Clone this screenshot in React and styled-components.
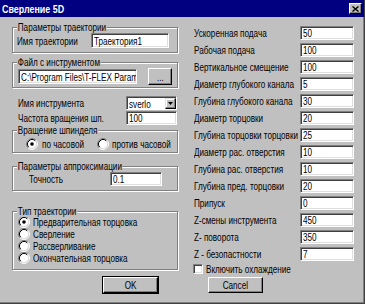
import React from 'react';
import styled, { createGlobalStyle } from 'styled-components';

const GlobalStyle = createGlobalStyle`
    html, body {
        margin: 0;
        padding: 0;
        background: #c0c0c0;
    }
    body {
        font-family: "Liberation Sans", Arial, sans-serif;
        font-size: 10.5px;
        color: #000;
    }
`;

// the dialog font is a narrow bitmap face; squeeze Arial-metric text to its width
const Text = styled.span`
    display: inline-block;
    white-space: nowrap;
    transform: scaleX(${p => p.$scale || 0.775});
    transform-origin: ${p => (p.$center ? 'center' : 'left')} center;
`;

const Window = styled.div`
    width: 365px;
    height: 304px;
    box-sizing: border-box;
    background: #c0c0c0;
    border-right: 1px solid #404040;
    border-bottom: 1px solid #404040;
    box-shadow: inset -1px -1px 0 #808080;
    overflow: hidden;
`;
const TitleBar = styled.div`
    height: 17px;
    background: #000080;
    display: flex;
    align-items: center;
    justify-content: space-between;
    padding: 0 2px 0 2px;
`;
const TitleText = styled(Text)`
    color: #fff;
    font-weight: bold;
    font-size: 11px;
`;
const CloseButton = styled.div`
    width: 13px;
    height: 11px;
    box-sizing: border-box;
    background: #c0c0c0;
    border-top: 1px solid #fff;
    border-left: 1px solid #fff;
    border-right: 1px solid #000;
    border-bottom: 1px solid #000;
    box-shadow: inset -1px -1px 0 #808080;
    display: flex;
    align-items: center;
    justify-content: center;
`;
const Body = styled.div`
    display: flex;
    align-items: flex-start;
    padding-left: 12px;
`;
const LeftColumn = styled.div`
    width: 166px;
    padding-top: 5px;
    display: flex;
    flex-direction: column;
`;
const RightColumn = styled.div`
    width: 160px;
    margin-left: 16px;
    padding-top: 9px;
    display: flex;
    flex-direction: column;
`;
const Group = styled.div`
    margin-top: ${p => p.$top || 0}px;
    border: 1px solid #808080;
    box-shadow: inset 1px 1px 0 #fff, 1px 1px 0 #fff;
`;
const Caption = styled.div`
    width: fit-content;
    margin: -6px 0 0 4px;
    padding: 0 1px;
    line-height: 11px;
    white-space: nowrap;
    background: #c0c0c0;
    transform: scaleX(0.775);
    transform-origin: left center;
`;
const GroupRow = styled.div`
    display: flex;
    align-items: center;
    height: ${p => p.$h}px;
    padding: 0 0 ${p => p.$pb}px ${p => p.$pl}px;
`;
const Label = styled.div`
    width: ${p => (p.$w ? `${p.$w}px` : 'auto')};
    flex: ${p => (p.$w ? 'none' : '1 1 0')};
    min-width: 0;
    line-height: 12px;
`;
const Field = styled.div`
    width: ${p => p.$w}px;
    height: ${p => p.$h || 14}px;
    flex: none;
    box-sizing: border-box;
    padding: 0 2px;
    background: #fff;
    border-top: 1px solid #808080;
    border-left: 1px solid #808080;
    border-right: 1px solid #fff;
    border-bottom: 1px solid #fff;
    box-shadow: inset 1px 1px 0 #404040, inset -1px -1px 0 #dfdfdf;
    display: flex;
    align-items: center;
    overflow: hidden;
`;
const Button = styled.div`
    width: ${p => p.$w}px;
    height: ${p => p.$h}px;
    margin-left: ${p => p.$left || 0}px;
    margin-top: ${p => p.$top || 0}px;
    box-sizing: border-box;
    background: #c0c0c0;
    border-top: 1px solid #fff;
    border-left: 1px solid #fff;
    border-right: 1px solid #000;
    border-bottom: 1px solid #000;
    box-shadow: inset -1px -1px 0 #808080;
    outline: ${p => (p.$default ? '1px solid #000' : 'none')};
    display: flex;
    align-items: center;
    justify-content: center;
    flex: none;
`;
const FormRow = styled.div`
    display: flex;
    align-items: center;
    height: 14px;
    margin-top: ${p => p.$top || 0}px;
    padding: 0 1px 0 6px;
`;
const Combo = styled.div`
    width: 51px;
    height: 14px;
    flex: none;
    box-sizing: border-box;
    background: #fff;
    border-top: 1px solid #808080;
    border-left: 1px solid #808080;
    border-right: 1px solid #fff;
    border-bottom: 1px solid #fff;
    box-shadow: inset 1px 1px 0 #404040;
    display: flex;
    align-items: stretch;
    padding: 1px 0 0 1px;
`;
const ComboText = styled.div`
    flex: 1;
    padding-left: 1px;
    display: flex;
    align-items: center;
    overflow: hidden;
`;
const ComboArrow = styled.span`
    width: 11px;
    box-sizing: border-box;
    background: #c0c0c0;
    border-top: 1px solid #dfdfdf;
    border-left: 1px solid #dfdfdf;
    border-right: 1px solid #000;
    border-bottom: 1px solid #000;
    box-shadow: inset -1px -1px 0 #808080, inset 1px 1px 0 #fff;
    display: flex;
    align-items: center;
    justify-content: center;
`;
const RadioLine = styled.div`
    display: grid;
    grid-template-columns: 71px auto;
    height: 12px;
    padding: 2px 0 2px 13px;
`;
const RadioList = styled.div`
    margin-top: -1px;
    padding: 0 0 5px 5px;
`;
const RadioItem = styled.div`
    display: flex;
    align-items: center;
    gap: ${p => p.$gap}px;
    height: 12px;
    min-width: 0;
`;
const SideRow = styled.div`
    display: flex;
    align-items: center;
    height: 14px;
    margin-bottom: 3px;
`;
const CheckRow = styled.div`
    display: flex;
    align-items: center;
    gap: 3px;
    height: 10px;
    margin-left: -1px;
`;
const CheckBox = styled.span`
    width: 10px;
    height: 10px;
    flex: none;
    box-sizing: border-box;
    background: #fff;
    border-top: 1px solid #808080;
    border-left: 1px solid #808080;
    border-right: 1px solid #fff;
    border-bottom: 1px solid #fff;
    box-shadow: inset 1px 1px 0 #404040, inset -1px -1px 0 #dfdfdf;
`;

const Radio = ({ checked }) => (
    <svg width="12" height="12" viewBox="0 0 12 12" style={{ flex: 'none' }}>
        <circle cx="6" cy="6" r="4.5" fill="#fff" />
        <path d="M2.11 9.89 A5.5 5.5 0 0 1 9.89 2.11" fill="none" stroke="#808080" />
        <path d="M2.82 9.18 A4.5 4.5 0 0 1 9.18 2.82" fill="none" stroke="#000" />
        <path d="M9.89 2.11 A5.5 5.5 0 0 1 2.11 9.89" fill="none" stroke="#fff" />
        <path d="M9.18 2.82 A4.5 4.5 0 0 1 2.82 9.18" fill="none" stroke="#dfdfdf" />
        {checked && <circle cx="6" cy="6" r="1.8" fill="#000" />}
    </svg>
);

const params = [
    ['Ускоренная подача', '50'],
    ['Рабочая подача', '100'],
    ['Вертикальное смещение', '100'],
    ['Диаметр глубокого канала', '5'],
    ['Глубина глубокого канала', '30'],
    ['Диаметр торцовки', '20'],
    ['Глубина торцовки торцовки', '25'],
    ['Диаметр рас. отверстия', '10'],
    ['Глубина рас. отверстия', '10'],
    ['Глубина пред. торцовки', '20'],
    ['Припуск', '0'],
    ['Z-смены инструмента', '450'],
    ['Z- поворота', '350'],
    ['Z - безопастности', '7'],
];

const trajectoryTypes = [
    'Предварительная торцовка',
    'Сверление',
    'Рассверливание',
    'Окончательная торцовка',
];

export default function App() {
    return (
        <Window>
            <GlobalStyle />
            <TitleBar>
                <TitleText $scale={0.81}>Сверление 5D</TitleText>
                <CloseButton>
                    <svg width="7" height="6" viewBox="0 0 7 6">
                        <path d="M0.5 0.5 L6.5 5.5 M6.5 0.5 L0.5 5.5" stroke="#000" strokeWidth="1.4" />
                    </svg>
                </CloseButton>
            </TitleBar>
            <Body>
                <LeftColumn>
                    <Group $top={5}>
                        <Caption>Параметры траектории</Caption>
                        <GroupRow $h={15} $pb={4} $pl={4}>
                            <Label $w={74}><Text>Имя траектории</Text></Label>
                            <Field $w={78} $h={15}><Text>Траектория1</Text></Field>
                        </GroupRow>
                    </Group>
                    <Group $top={9}>
                        <Caption>Файл с инструментом</Caption>
                        <GroupRow $h={17} $pb={2} $pl={5}>
                            <Field $w={119} $h={15}><Text>{'C:\\Program Files\\T-FLEX Param'}</Text></Field>
                            <Button $w={24} $h={17} $left={11}><Text $center>...</Text></Button>
                        </GroupRow>
                    </Group>
                    <FormRow $top={8}>
                        <Label><Text>Имя инструмента</Text></Label>
                        <Combo>
                            <ComboText><Text>sverlo</Text></ComboText>
                            <ComboArrow>
                                <svg width="5" height="3" viewBox="0 0 5 3">
                                    <path d="M0 0 H5 L2.5 3 Z" fill="#000" />
                                </svg>
                            </ComboArrow>
                        </Combo>
                    </FormRow>
                    <FormRow $top={1}>
                        <Label><Text>Частота вращения шп.</Text></Label>
                        <Field $w={51}><Text>100</Text></Field>
                    </FormRow>
                    <Group $top={5}>
                        <Caption>Вращение шпинделя</Caption>
                        <RadioLine>
                            <RadioItem $gap={4}><Radio checked /><Text>по часовой</Text></RadioItem>
                            <RadioItem $gap={3}><Radio /><Text>против часовой</Text></RadioItem>
                        </RadioLine>
                    </Group>
                    <Group $top={13}>
                        <Caption>Параметры аппроксимации</Caption>
                        <GroupRow $h={14} $pb={4} $pl={16}>
                            <Label $w={81}><Text>Точность</Text></Label>
                            <Field $w={52}><Text>0.1</Text></Field>
                        </GroupRow>
                    </Group>
                    <Group $top={20}>
                        <Caption>Тип траектории</Caption>
                        <RadioList>
                            {trajectoryTypes.map((t, i) => (
                                <RadioItem key={t} $gap={3}><Radio checked={i === 0} /><Text>{t}</Text></RadioItem>
                            ))}
                        </RadioList>
                    </Group>
                    <Button $w={55} $h={16} $left={91} $top={7} $default><Text $center>OK</Text></Button>
                </LeftColumn>
                <RightColumn>
                    {params.map(([label, value]) => (
                        <SideRow key={label}>
                            <Label><Text>{label}</Text></Label>
                            <Field $w={54}><Text>{value}</Text></Field>
                        </SideRow>
                    ))}
                    <CheckRow>
                        <CheckBox />
                        <Text>Включить охлаждение</Text>
                    </CheckRow>
                    <Button $w={55} $h={16} $left={14} $top={3}><Text $center>Cancel</Text></Button>
                </RightColumn>
            </Body>
        </Window>
    );
}
